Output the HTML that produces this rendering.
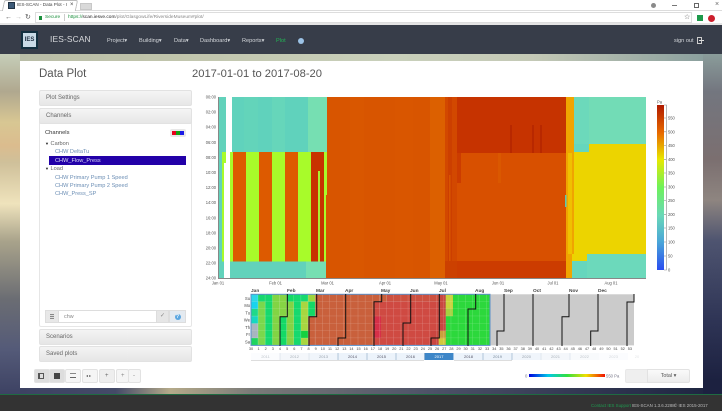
<!DOCTYPE html>
<html><head><meta charset="utf-8"><title>IES-SCAN - Data Plot</title>
<style>
html,body{margin:0;padding:0;background:#fff}
#r{position:relative;width:722px;height:411px;overflow:hidden;font-family:"Liberation Sans",sans-serif;color:#555;filter:blur(.35px)}
#r div,#r span.a{position:absolute;white-space:nowrap;box-sizing:border-box}
.t{line-height:10px;height:10px}
.p{background:linear-gradient(#f4f4f4,#e6e6e6);border:1px solid #e2e2e2;border-radius:2px;left:39px;width:153px;font-size:6px;line-height:14px;padding-left:6px;color:#666}
.n{font-size:5.6px;color:#d5d8dc;top:36px}
.c{font-size:5.6px;color:#6d8fb5;left:55px}
.b{background:#f1f1f1;border:1px solid #e2e2e2;top:369px;height:14px;border-radius:2px}
</style></head><body><div id="r">
<!-- chrome -->
<div style="left:0;top:0;width:722px;height:25px;background:#fff"></div>
<div style="left:0;top:10px;width:722px;height:1px;background:#dcdcdc"></div>
<div style="left:0;top:23px;width:722px;height:2px;background:#e4e4e4"></div>
<div style="left:3px;top:0;width:74px;height:11px;background:#fff;border:1px solid #bbb;border-bottom:0;border-radius:2px 2px 0 0;transform:skewX(-12deg)"></div>
<div style="left:80px;top:3px;width:12px;height:7px;background:#d9d9d9;border:1px solid #c8c8c8"></div>
<div style="left:8px;top:2px;width:7px;height:7px;background:#3d5a78;border:1px solid #234"></div>
<div class="t" style="left:17px;top:0;font-size:4.6px;color:#444">IES-SCAN - Data Plot - I</div>
<div class="t" style="left:70px;top:0;font-size:6px;color:#444">×</div>
<div class="t" style="left:5px;top:13px;font-size:7px;color:#555">←</div>
<div class="t" style="left:15px;top:13px;font-size:7px;color:#bbb">→</div>
<div class="t" style="left:25px;top:13px;font-size:7px;color:#555">↻</div>
<div style="left:35px;top:12px;width:657px;height:11px;background:#fff;border:1px solid #ddd"></div>
<div style="left:39px;top:15.5px;width:3px;height:4px;background:#1a8f3c"></div>
<div class="t" style="left:45px;top:13px;font-size:4.8px;color:#1a8f3c">Secure</div>
<div style="left:64px;top:14px;width:1px;height:7px;background:#ccc"></div>
<div class="t" style="left:68px;top:13px;font-size:4.8px;color:#888"><span style="color:#1a8f3c">https://</span><span style="color:#222">scan.iesve.com</span>/plot/GlasgowLife/RiversideMuseum#plot/</div>
<div class="t" style="left:684px;top:13px;font-size:7px;color:#555">☆</div>
<div style="left:696.500px;top:15px;width:6px;height:6px;background:#1d9a4b"></div>
<div style="left:708px;top:15px;width:7px;height:7px;background:#cc1f2d;border-radius:50%"></div>
<div style="left:650.500px;top:3px;width:5px;height:5px;background:#8a8a8a;border-radius:50%"></div>
<div style="left:672px;top:5px;width:5px;height:1px;background:#777"></div>
<div style="left:694px;top:3px;width:5px;height:5px;border:1px solid #666"></div>
<div class="t" style="left:715px;top:0;font-size:7px;color:#666">×</div>
<!-- nav -->
<div style="left:0;top:25px;width:722px;height:29px;background:#373d49"></div>
<div style="left:21px;top:31px;width:17px;height:18px;background:#12303f"></div>
<div style="left:23px;top:33px;width:13px;height:14px;background:#c8dbe6;font:bold 6px/14px 'Liberation Sans',sans-serif;color:#234;text-align:center">IES</div>
<div class="t" style="left:50px;top:33.5px;font-size:8.4px;color:#d8dadd;letter-spacing:.15px">IES-SCAN</div>
<div class="n t" style="left:107px">Project▾</div>
<div class="n t" style="left:139px">Building▾</div>
<div class="n t" style="left:174px">Data▾</div>
<div class="n t" style="left:200px">Dashboard▾</div>
<div class="n t" style="left:242px">Reports▾</div>
<div class="n t" style="left:276px;color:#22b455">Plot</div>
<div style="left:297.5px;top:38px;width:6px;height:6px;border-radius:50%;background:#9cc3e6"></div>
<div class="n t" style="left:674px">sign out</div>
<div style="left:697px;top:37px;width:5px;height:7px;border:1px solid #ccc;border-right-width:1px"></div>
<div style="left:699px;top:40px;width:5px;height:1px;background:#ddd"></div>
<!-- background -->
<div style="left:0;top:54px;width:20px;height:340px;background:linear-gradient(#c5cdb8 0,#b0a88f 11%,#d8c793 20%,#dbbc8e 27%,#cfc09a 32%,#efe3bc 44%,#a9a38b 55%,#6b6d73 72%,#545a78 87%,#3d4263 100%)"></div>
<div style="left:703px;top:54px;width:19px;height:340px;background:linear-gradient(#8a9c9a 0,#73767f 11%,#7b6f70 31%,#8e8580 43%,#4e5470 55%,#2f3556 78%,#1c2140 96%)"></div>
<div style="left:20px;top:54px;width:683px;height:7px;background:linear-gradient(90deg,#b9bda7 0,#c0c4ab 20%,#c9d0bb 55%,#c4c9b6 75%,#8ba09e 100%)"></div>
<div style="left:20px;top:388px;width:683px;height:6px;background:linear-gradient(90deg,#3d4263 0,#444a68 14%,#b5aa8a 22%,#7a7a78 34%,#4e5268 60%,#353a55 80%,#1f2642 100%)"></div>
<div style="left:20px;top:61px;width:683px;height:327px;background:#fff"></div>
<!-- footer -->
<div style="left:0;top:394px;width:722px;height:17px;background:#333;border-top:1px solid #1f6b42"></div>
<div class="t" style="left:591px;top:400.5px;font-size:4.4px;color:#1f9a50">Contact IES Support</div>
<div class="t" style="left:632px;top:400.5px;font-size:4.4px;color:#bbb">IES-SCAN 1.3.6.2288</div>
<div class="t" style="left:674px;top:400.5px;font-size:4.4px;color:#bbb">© IES 2015-2017</div>
<!-- titles -->
<div style="left:39px;top:67px;font-size:11.5px;line-height:14px;color:#555">Data Plot</div>
<div style="left:192px;top:67px;font-size:11.2px;line-height:14px;color:#555">2017-01-01 to 2017-08-20</div>
<!-- left panels -->
<div class="p" style="top:90px;height:16px">Plot Settings</div>
<div style="left:39px;top:108px;width:153px;height:219px;border:1px solid #e6e6e6;border-radius:2px"></div>
<div class="p" style="top:108px;height:16px">Channels</div>
<div class="t" style="left:45px;top:128px;font-size:5.8px;color:#333">Channels</div>
<div style="left:170px;top:129px;width:16px;height:8px;background:#e8e8e8;border-radius:2px"></div>
<div style="left:172px;top:131px;width:4px;height:4px;background:#e8001c"></div>
<div style="left:176px;top:131px;width:4px;height:4px;background:#12a012"></div>
<div style="left:180px;top:131px;width:4px;height:4px;background:#1a1ae6"></div>
<div class="t" style="left:45px;top:138.5px;font-size:5.6px;color:#666"><span style="font-size:4px;color:#222">▼</span> Carbon</div>
<div class="c t" style="top:147px">CHW DeltaTu</div>
<div style="left:49px;top:156px;width:137px;height:9px;background:#2200a8"></div>
<div class="c t" style="top:155.5px;color:#dcdcf5">CHW_Flow_Press</div>
<div class="t" style="left:45px;top:164px;font-size:5.6px;color:#666"><span style="font-size:4px;color:#222">▼</span> Load</div>
<div class="c t" style="top:172.5px">CHW Primary Pump 1 Speed</div>
<div class="c t" style="top:181px">CHW Primary Pump 2 Speed</div>
<div class="c t" style="top:189px">CHW_Press_SP</div>
<!-- search row -->
<div style="left:45px;top:310px;width:141px;height:13px;border:1px solid #ddd;border-radius:2px;background:#fff"></div>
<div style="left:45px;top:310px;width:14px;height:13px;background:#e8e8e8;border:1px solid #ddd"></div>
<div style="left:50px;top:314px;width:4px;height:5px;background:repeating-linear-gradient(#888 0,#888 1px,#ddd 1px,#ddd 2px)"></div>
<div class="t" style="left:64px;top:312px;font-size:5.4px;color:#888">chw</div>
<div style="left:156px;top:310px;width:13px;height:13px;background:#e6e6e6;border:1px solid #ddd;font-size:6px;line-height:11px;text-align:center;color:#888">✓</div>
<div style="left:169px;top:310px;width:17px;height:13px;background:#e4eaf0;border:1px solid #ddd"></div>
<div style="left:174.500px;top:313.500px;width:6px;height:6px;border-radius:50%;background:#5aa6e0;font:bold 5px/6px 'Liberation Sans',sans-serif;color:#fff;text-align:center">?</div>
<div class="p" style="top:329px;height:16px">Scenarios</div>
<div class="p" style="top:346px;height:16px">Saved plots</div>
<!-- toolbar -->
<div class="b" style="left:34px;width:16px;background:#ddd"></div>
<div class="b" style="left:49px;width:16px;background:#ddd"></div>
<div class="b" style="left:65px;width:16px;background:#f5f5f5"></div>
<div class="b" style="left:82px;width:16px;background:#f5f5f5"></div>
<div class="b" style="left:99px;width:16px;background:#eee"></div>
<div class="b" style="left:116px;width:13px;background:#f5f5f5"></div>
<div class="b" style="left:128px;width:13px;background:#f5f5f5"></div>
<div style="left:38px;top:373px;width:6px;height:6px;border:1px solid #555;border-left-width:2px"></div>
<div style="left:54px;top:373px;width:6px;height:6px;background:#444"></div>
<div style="left:70px;top:373px;width:6px;height:5px;border-bottom:1px solid #666;border-top:1px solid #888"></div>
<div class="t" style="left:86px;top:371px;font-size:4px;color:#555">◂ ▸</div>
<div class="t" style="left:105px;top:371px;font-size:6px;color:#666">+</div>
<div class="t" style="left:121px;top:371px;font-size:6px;color:#888">+</div>
<div class="t" style="left:133px;top:371px;font-size:6px;color:#888">-</div>
<!-- plots -->
<svg width="722" height="411" style="position:absolute;left:0;top:0" font-family="Liberation Sans, sans-serif">
<defs>
<linearGradient id="cb" x1="0" y1="1" x2="0" y2="0">
<stop offset="0" stop-color="#2a4df0"/><stop offset=".17" stop-color="#4aa6d8"/><stop offset=".33" stop-color="#6ad8b8"/><stop offset=".5" stop-color="#6ef25a"/><stop offset=".67" stop-color="#e8e800"/><stop offset=".83" stop-color="#e86a00"/><stop offset="1" stop-color="#b01a00"/>
</linearGradient>
<linearGradient id="mb"><stop offset="0" stop-color="#0000e0"/><stop offset=".25" stop-color="#00c8e8"/><stop offset=".5" stop-color="#30e040"/><stop offset=".75" stop-color="#f0e000"/><stop offset="1" stop-color="#f01000"/></linearGradient>
<pattern id="gr" x="251" y="294.3" width="7.15" height="7.3" patternUnits="userSpaceOnUse"><path d="M7.15 0V7.3M0 7.3H7.15" stroke="#fff" stroke-opacity=".4" stroke-width=".6" fill="none"/></pattern>
</defs>
<!-- heat map -->
<rect x="218.500" y="97" width="427.500" height="181" fill="#62d2bb"/>
<rect x="226" y="97" width="6" height="55" fill="#fff"/>
<rect x="232" y="97" width="95.500" height="55" fill="#60d2bc"/>
<rect x="244" y="97" width="14" height="55" fill="#63d4ba"/>
<rect x="272" y="97" width="13" height="55" fill="#66d6ba"/>
<rect x="308" y="97" width="19.500" height="55" fill="#76dfb2"/>
<rect x="222" y="152" width="2" height="109.500" fill="#a8fb2a"/>
<rect x="224" y="152" width="2" height="11" fill="#a8fb2a"/>
<rect x="226" y="152" width="4" height="11" fill="#fff"/>
<rect x="224" y="163" width="6" height="115" fill="#fff"/>
<rect x="230" y="152" width="97" height="109.500" fill="#a8fb2a"/>
<rect x="233" y="152" width="13" height="109.500" fill="#dd5a00"/>
<rect x="259" y="152" width="13" height="109.500" fill="#dd5a00"/>
<rect x="285" y="152" width="13" height="109.500" fill="#dd5a00"/>
<rect x="311" y="152" width="13" height="109.500" fill="#c83200"/>
<rect x="318" y="171" width="2" height="91" fill="#a8f030"/>
<rect x="230" y="261.500" width="97" height="16.500" fill="#62d2bb"/>
<rect x="306" y="261.500" width="21" height="16.500" fill="#76dfb2"/>
<rect x="327" y="97" width="118" height="181" fill="#d85500"/>
<rect x="326" y="195" width="2" height="83" fill="#d85500"/>
<rect x="350" y="97" width="14" height="181" fill="#d95700"/>
<rect x="395" y="97" width="18" height="181" fill="#d95600"/>
<rect x="430" y="97" width="15" height="181" fill="#dc6000"/>
<rect x="445" y="97" width="12" height="181" fill="#d24800"/>
<rect x="448" y="97" width="4" height="181" fill="#cc3f00"/>
<rect x="457" y="97" width="109.500" height="56" fill="#c63300"/>
<rect x="457" y="153" width="109.500" height="108" fill="#d85000"/>
<rect x="457" y="153" width="4" height="30" fill="#cc3c00"/>
<rect x="449" y="175" width="1.500" height="100" fill="#d85400"/>
<rect x="498" y="153" width="3" height="30" fill="#da5800"/>
<rect x="510" y="125" width="2" height="28" fill="#b82800"/>
<rect x="532" y="125" width="2" height="28" fill="#b82800"/>
<rect x="540" y="125" width="2" height="28" fill="#b82800"/>
<rect x="457" y="261" width="109.500" height="17" fill="#cc3c00"/>
<rect x="445" y="261" width="12" height="17" fill="#cc4000"/>
<rect x="566" y="97" width="8" height="181" fill="#f0a400"/>
<rect x="568" y="153" width="4" height="101" fill="#f0c000"/>
<rect x="574" y="97" width="72" height="47" fill="#6cd9bb"/>
<rect x="574" y="144" width="15" height="8" fill="#66d6bd"/>
<rect x="589" y="97" width="57" height="47" fill="#72dcb6"/>
<rect x="574" y="152" width="72" height="102" fill="#ecd400"/>
<rect x="589" y="144" width="57" height="8" fill="#ecd400"/>
<rect x="572" y="254" width="15" height="7" fill="#ecd400"/>
<rect x="572" y="261" width="15" height="17" fill="#66d6bd"/>
<rect x="587" y="254" width="59" height="24" fill="#6cd9bb"/>
<rect x="565" y="195" width="1.500" height="12" fill="#5fc8b0"/>
<path d="M218.500 97V278.500H646" stroke="#888" fill="none" stroke-width="1"/>
<g font-size="4.100" fill="#555" text-anchor="end">
<text x="216" y="98.500">00:00</text><text x="216" y="113.600">02:00</text><text x="216" y="128.700">04:00</text><text x="216" y="143.800">06:00</text><text x="216" y="158.900">08:00</text><text x="216" y="174">10:00</text><text x="216" y="189.100">12:00</text><text x="216" y="204.200">14:00</text><text x="216" y="219.300">16:00</text><text x="216" y="234.400">18:00</text><text x="216" y="249.500">20:00</text><text x="216" y="264.600">22:00</text><text x="216" y="279.700">24:00</text>
</g>
<g font-size="4.100" fill="#555" text-anchor="middle">
<text x="218" y="284.500">Jan 01</text><text x="275.500" y="284.500">Feb 01</text><text x="327.500" y="284.500">Mar 01</text><text x="385" y="284.500">Apr 01</text><text x="441" y="284.500">May 01</text><text x="498" y="284.500">Jun 01</text><text x="553" y="284.500">Jul 01</text><text x="611" y="284.500">Aug 01</text>
</g>
<!-- colour bar -->
<rect x="657" y="105" width="7" height="165" fill="url(#cb)"/>
<path d="M664 105H666.500V270H664M664 118H666M664 131.800H666M664 145.500H666M664 159.300H666M664 173H666M664 187H666M664 200.500H666M664 214.300H666M664 228H666M664 242H666M664 256H666" stroke="#888" stroke-width=".6" fill="none"/>
<g font-size="4.100" fill="#555">
<text x="657" y="103.500">Pa</text>
<text x="668" y="119.500">550</text><text x="668" y="133.300">500</text><text x="668" y="147">450</text><text x="668" y="160.800">400</text><text x="668" y="174.500">350</text><text x="668" y="188.500">300</text><text x="668" y="202">250</text><text x="668" y="215.800">200</text><text x="668" y="229.500">150</text><text x="668" y="243.500">100</text><text x="668" y="257.500">50</text><text x="668" y="271.500">0</text>
</g>
<!-- calendar -->
<rect x="251" y="294.300" width="383" height="51.100" fill="#cbcbcb"/>
<rect x="251" y="294.300" width="7.150" height="7.300" fill="#2bd7e8"/>
<rect x="251" y="301.600" width="7.150" height="7.300" fill="#19d4ee"/>
<rect x="251" y="308.900" width="7.150" height="7.300" fill="#1fd98a"/>
<rect x="251" y="316.200" width="7.150" height="7.300" fill="#17d7c0"/>
<rect x="251" y="323.500" width="7.150" height="14.600" fill="#a8b5c0"/>
<rect x="251" y="338.100" width="7.150" height="7.300" fill="#1ed460"/>
<rect x="258.150" y="294.300" width="7.150" height="51.100" fill="#7ad84c"/>
<rect x="258.150" y="294.300" width="7.150" height="7.300" fill="#18d870"/>
<rect x="265.300" y="294.300" width="7.150" height="51.100" fill="#16d96e"/>
<rect x="272.450" y="294.300" width="7.150" height="51.100" fill="#82d444"/>
<rect x="279.600" y="294.300" width="7.150" height="22.400" fill="#86d444"/>
<rect x="279.600" y="316.700" width="7.150" height="28.700" fill="#14d966"/>
<rect x="286.750" y="294.300" width="7.150" height="51.100" fill="#84d444"/>
<rect x="286.750" y="294.300" width="7.150" height="7.300" fill="#14d966"/>
<rect x="293.900" y="294.300" width="7.150" height="51.100" fill="#16d96e"/>
<rect x="301.050" y="294.300" width="7.150" height="7.300" fill="#16d96e"/>
<rect x="301.050" y="301.600" width="7.150" height="29.200" fill="#a8d640"/>
<rect x="301.050" y="330.800" width="7.150" height="7.300" fill="#14d040"/>
<rect x="301.050" y="338.100" width="7.150" height="7.300" fill="#a8d640"/>
<rect x="308.200" y="294.300" width="7.150" height="7.300" fill="#9ed43e"/>
<rect x="308.200" y="301.600" width="7.150" height="14.600" fill="#14d966"/>
<rect x="308.200" y="316.200" width="7.150" height="29.200" fill="#c9603c"/>
<rect x="315.350" y="294.300" width="64.350" height="51.100" fill="#c9603c"/>
<rect x="379.700" y="294.300" width="7.150" height="7.300" fill="#c9603c"/>
<rect x="379.700" y="301.600" width="59" height="43.800" fill="#cf4a42"/>
<rect x="386.850" y="294.300" width="52" height="7.300" fill="#cc5040"/>
<rect x="374" y="316.200" width="7" height="21.900" fill="#d63048"/>
<rect x="374" y="301.600" width="5.700" height="14.600" fill="#cf4a42"/>
<rect x="374" y="338.100" width="5.700" height="7.300" fill="#cf4a42"/>
<rect x="438.700" y="294.300" width="7.150" height="51.100" fill="#c94640"/>
<rect x="431" y="330.800" width="7.700" height="14.600" fill="#c94640"/>
<rect x="438.700" y="330.800" width="7" height="7.300" fill="#c8a03c"/>
<rect x="438.700" y="338.100" width="7" height="7.300" fill="#d2c83c"/>
<rect x="445.850" y="294.300" width="7.150" height="51.100" fill="#2cd83c"/>
<rect x="445.850" y="294.300" width="7.150" height="14.600" fill="#c8d23c"/>
<rect x="445.850" y="308.900" width="7.150" height="7.300" fill="#a4d040"/>
<rect x="453" y="294.300" width="37" height="51.100" fill="#2cd83c"/>
<rect x="251" y="294.300" width="239" height="51.100" fill="url(#gr)"/>
<rect x="251" y="294.300" width="239" height="51.100" fill="none" stroke="#5a8fc8" stroke-width="1"/>
<path d="M287.300 294V316.700H280V346M316.700 294V316.700H309V346M345.700 294V338H338V346M381.700 294V301.700H374V346M410.700 294V323H403V346M439.300 294V338H431V346M475.700 294V309H468V346M504 294V331H497V346M533 294V346M569 294V316.700H562V346M598 294V331H590.700V346M634 294V302H627V346" fill="none" stroke="#111" stroke-width="1"/>
<g font-size="4.800" font-weight="bold" fill="#444">
<text x="251" y="292">Jan</text><text x="287" y="292">Feb</text><text x="316" y="292">Mar</text><text x="345" y="292">Apr</text><text x="381" y="292">May</text><text x="410" y="292">Jun</text><text x="439" y="292">Jul</text><text x="475" y="292">Aug</text><text x="504" y="292">Sep</text><text x="533" y="292">Oct</text><text x="569" y="292">Nov</text><text x="598" y="292">Dec</text>
</g>
<g font-size="4.100" fill="#444" text-anchor="end">
<text x="250" y="300">Su</text><text x="250" y="307">Mo</text><text x="250" y="314.500">Tu</text><text x="250" y="321.500">We</text><text x="250" y="329">Th</text><text x="250" y="336">Fr</text><text x="250" y="343.500">Sa</text>
</g>
<!-- year strip -->
<rect x="251" y="353" width="29" height="7" fill="#fbfcfe"/><rect x="280" y="353" width="29" height="7" fill="#f4f7fb"/><rect x="309" y="353" width="29" height="7" fill="#f0f5fb"/><rect x="338" y="353" width="29" height="7" fill="#ecf3fb"/><rect x="367" y="353" width="29" height="7" fill="#ecf3fb"/><rect x="396" y="353" width="29" height="7" fill="#ecf3fb"/>
<rect x="424.500" y="353" width="29" height="7" fill="#3d86c8"/>
<rect x="454" y="353" width="29" height="7" fill="#ecf3fb"/><rect x="483" y="353" width="29" height="7" fill="#ecf3fb"/><rect x="512" y="353" width="29" height="7" fill="#f0f5fb"/><rect x="541" y="353" width="29" height="7" fill="#f4f7fb"/><rect x="570" y="353" width="29" height="7" fill="#f8fafc"/><rect x="599" y="353" width="29" height="7" fill="#fbfcfe"/>
<path d="M338 353V360M367 353V360M396 353V360M424.500 353V360M483 353V360M512 353V360" stroke="#8aa8c4" stroke-width=".6"/>
<path d="M280 353V360M309 353V360M541 353V360M570 353V360" stroke="#d4dde6" stroke-width=".6"/>
<path d="M251 360.500H424M454 360.500H512" stroke="#bbb" stroke-width=".6"/>
<g font-size="4" text-anchor="middle" fill="#7a8a9a">
<text x="265.500" y="358" fill="#c0c6cc">2011</text><text x="294.500" y="358" fill="#aab2ba">2012</text><text x="323.500" y="358" fill="#98a2ac">2013</text><text x="352.500" y="358" fill="#556">2014</text><text x="381.500" y="358" fill="#556">2015</text><text x="410.500" y="358" fill="#556">2016</text><text x="439" y="358" fill="#fff">2017</text><text x="468.500" y="358" fill="#556">2018</text><text x="497.500" y="358">2019</text><text x="526.500" y="358" fill="#98a2ac">2020</text><text x="555.500" y="358" fill="#aab2ba">2021</text><text x="584.500" y="358" fill="#c0c6cc">2022</text><text x="613.500" y="358" fill="#d4d8dc">2023</text><text x="637" y="358" fill="#e4e6e8">20</text>
</g>
<!-- mini legend -->
<rect x="529" y="374" width="76" height="3" fill="url(#mb)"/>
<text x="525" y="377.500" font-size="4.200" fill="#778">0</text>
<text x="606" y="377.500" font-size="4.200" fill="#778">550 Pa</text>
</svg>
<!-- week numbers -->
<div style="left:247px;top:347px;display:flex;font-size:3.800px;line-height:5px;color:#444;text-align:center"><span style="width:8px">30</span><span style="width:7.150px">1</span><span style="width:7.150px">2</span><span style="width:7.150px">3</span><span style="width:7.150px">4</span><span style="width:7.150px">5</span><span style="width:7.150px">6</span><span style="width:7.150px">7</span><span style="width:7.150px">8</span><span style="width:7.150px">9</span><span style="width:7.150px">10</span><span style="width:7.150px">11</span><span style="width:7.150px">12</span><span style="width:7.150px">13</span><span style="width:7.150px">14</span><span style="width:7.150px">15</span><span style="width:7.150px">16</span><span style="width:7.150px">17</span><span style="width:7.150px">18</span><span style="width:7.150px">19</span><span style="width:7.150px">20</span><span style="width:7.150px">21</span><span style="width:7.150px">22</span><span style="width:7.150px">23</span><span style="width:7.150px">24</span><span style="width:7.150px">25</span><span style="width:7.150px">26</span><span style="width:7.150px">27</span><span style="width:7.150px">28</span><span style="width:7.150px">29</span><span style="width:7.150px">30</span><span style="width:7.150px">31</span><span style="width:7.150px">32</span><span style="width:7.150px">33</span><span style="width:7.150px">34</span><span style="width:7.150px">35</span><span style="width:7.150px">36</span><span style="width:7.150px">37</span><span style="width:7.150px">38</span><span style="width:7.150px">39</span><span style="width:7.150px">40</span><span style="width:7.150px">41</span><span style="width:7.150px">42</span><span style="width:7.150px">43</span><span style="width:7.150px">44</span><span style="width:7.150px">45</span><span style="width:7.150px">46</span><span style="width:7.150px">47</span><span style="width:7.150px">48</span><span style="width:7.150px">49</span><span style="width:7.150px">50</span><span style="width:7.150px">51</span><span style="width:7.150px">52</span><span style="width:7.150px">53</span></div>
<!-- bottom right buttons -->
<div style="left:625px;top:369px;width:23px;height:14px;background:#efefef;border:1px solid #e8e8e8;border-radius:2px 0 0 2px"></div>
<div style="left:647px;top:369px;width:43px;height:14px;background:linear-gradient(#fafafa,#ececec);border:1px solid #e2e2e2;border-radius:0 2px 2px 0;font-size:5.400px;line-height:12px;text-align:center;color:#555">Total ▾</div>
</div></body></html>
